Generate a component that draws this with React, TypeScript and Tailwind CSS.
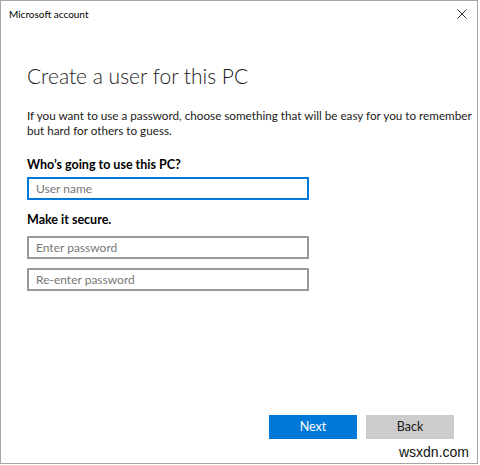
import React from "react";

export default function App() {
  const font = { fontFamily: 'Lato, "Noto Sans", sans-serif' };
  return (
    <div className="w-[480px] h-[465px] bg-white" style={font}>
      <div className="relative w-[478px] h-[464px] border border-[#a6a6a6] bg-white flex flex-col text-[#000]">
        <div className="h-[25px] flex items-center justify-between pl-[8px] pr-[10px]">
          <span className="text-[10px] leading-none">Microsoft account</span>
          <svg width="10" height="10" viewBox="0 0 10 10" className="mt-[1px]">
            <path d="M0.5 0.5 L9.5 9.5 M9.5 0.5 L0.5 9.5" stroke="#333" strokeWidth="1" />
          </svg>
        </div>
        <div className="flex flex-col pl-[26px] pt-[37px]">
          <h1 className="text-[21px] leading-[26px] font-light text-[#1a1a1a]">Create a user for this PC</h1>
          <p className="mt-[19px] text-[11.7px] leading-[14.5px] w-[448px] text-[#1a1a1a]">
            If you want to use a password, choose something that will be easy for you to remember but hard for others to guess.
          </p>
          <div className="mt-[20px] text-[12.5px] leading-[16px] font-bold">Who’s going to use this PC?</div>
          <div className="mt-[4px] w-[282px] h-[23px] border-2 border-[#0078d7] flex items-center pl-[7px] text-[12px] text-[#777]">
            User name
          </div>
          <div className="mt-[12px] text-[12.5px] leading-[16px] font-bold">Make it secure.</div>
          <div className="mt-[8px] w-[282px] h-[23px] border-2 border-[#999] flex items-center pl-[7px] text-[12px] text-[#777]">
            Enter password
          </div>
          <div className="mt-[9px] w-[282px] h-[23px] border-2 border-[#999] flex items-center pl-[7px] text-[12px] text-[#777]">
            Re-enter password
          </div>
        </div>
        <div className="mt-auto flex justify-end gap-[9px] pr-[23px] pb-[24px]">
          <div className="w-[88px] h-[24px] bg-[#0078d7] text-white text-[12.5px] flex items-center justify-center">Next</div>
          <div className="w-[88px] h-[24px] bg-[#cccccc] text-[#1a1a1a] text-[12.5px] flex items-center justify-center">Back</div>
        </div>
        <div className="absolute right-[8px] bottom-[4px] text-[14px] leading-none text-[#111]" style={{ fontFamily: '"Liberation Sans", Arial, sans-serif' }}>
          wsxdn.com
        </div>
      </div>
    </div>
  );
}
